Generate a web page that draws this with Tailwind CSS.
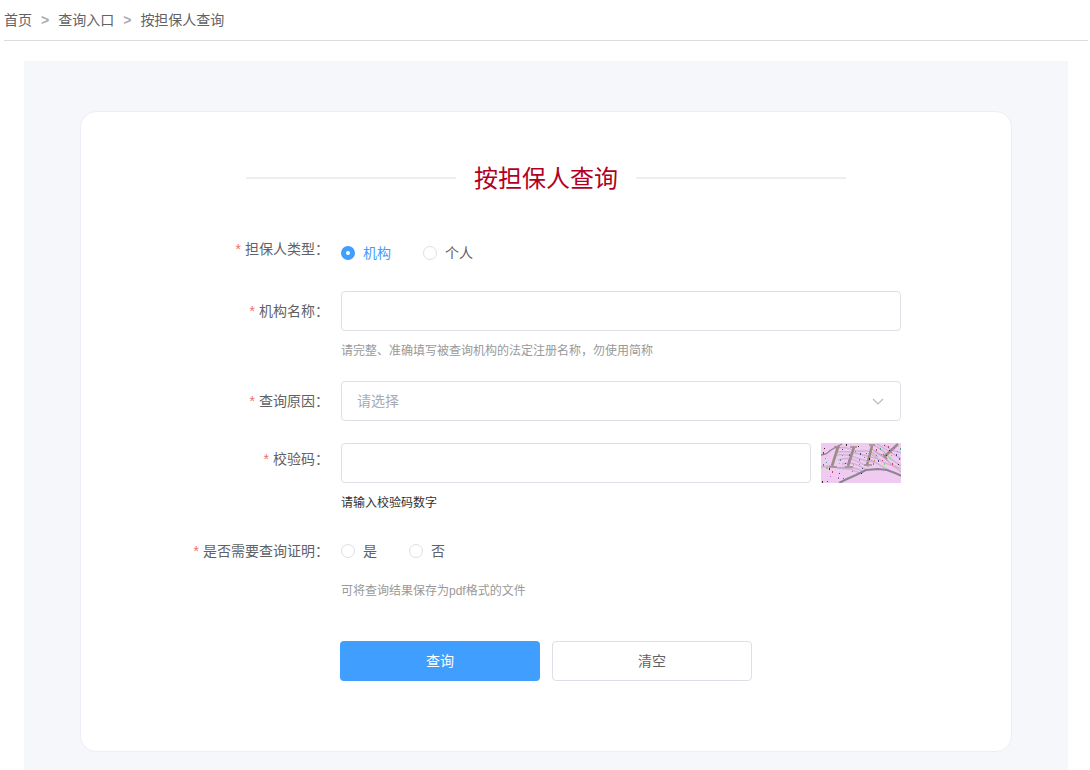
<!DOCTYPE html>
<html lang="zh-CN">
<head>
<meta charset="utf-8">
<meta name="viewport" content="width=device-width, initial-scale=1">
<title>按担保人查询</title>
<script src="https://cdn.jsdelivr.net/npm/@tailwindcss/browser@4"></script>
</head>
<body class="bg-white font-['Liberation_Sans','Noto_Sans_CJK_SC',sans-serif] text-sm text-[#606266]">
<nav aria-label="面包屑" class="ml-1 mr-0.5 flex h-[41px] items-center border-b border-[#dcdcdc]">
  <a href="#">首页</a><span class="mx-[9px] font-bold text-[#a8abb2]">&gt;</span>
  <a href="#">查询入口</a><span class="mx-[9px] font-bold text-[#a8abb2]">&gt;</span>
  <a href="#" aria-current="page">按担保人查询</a>
</nav>
<main class="ml-6 mr-[22px] mt-5 bg-[#f5f7fb] px-14 pt-[50px] pb-[18px]">
  <section class="rounded-2xl border border-[#ebeef5] bg-white pt-[47px] pb-[70px]">
    <div class="mx-auto flex max-w-[600px] items-center">
      <span class="h-0.5 flex-1 bg-[#eeeeee]"></span>
      <h1 class="w-[180px] pt-0.5 text-center text-2xl leading-9 font-normal text-[#b1001f]">按担保人查询</h1>
      <span class="h-0.5 flex-1 bg-[#eeeeee]"></span>
    </div>
    <form class="mx-auto mt-8 max-w-[710px]">
      <div class="mb-[22px] flex" role="radiogroup" aria-labelledby="type-label">
        <span id="type-label" class="w-[150px] shrink-0 pr-3 text-right leading-10"><span class="mr-1 text-[#f56c6c]">*</span>担保人类型：</span>
        <div class="flex h-10 items-center gap-8 pt-2">
          <label class="flex items-center gap-2 text-[#409eff]"><input type="radio" name="type" checked class="size-3.5 appearance-none rounded-full border border-[#dcdfe6] bg-white checked:border-5 checked:border-[#409eff]">机构</label>
          <label class="flex items-center gap-2"><input type="radio" name="type" class="size-3.5 appearance-none rounded-full border border-[#dcdfe6] bg-white checked:border-5 checked:border-[#409eff]">个人</label>
        </div>
      </div>
      <div class="mb-5 flex">
        <label for="org" class="w-[150px] shrink-0 pr-3 text-right leading-10"><span class="mr-1 text-[#f56c6c]">*</span>机构名称：</label>
        <div class="flex-1">
          <input id="org" type="text" class="block h-10 w-full rounded border border-[#dcdfe6] px-4 outline-none">
          <p class="mt-2.5 text-xs leading-5 text-[#999999]">请完整、准确填写被查询机构的法定注册名称，勿使用简称</p>
        </div>
      </div>
      <div class="mb-[22px] flex">
        <label for="reason" class="w-[150px] shrink-0 pr-3 text-right leading-10"><span class="mr-1 text-[#f56c6c]">*</span>查询原因：</label>
        <div class="relative flex-1">
          <select id="reason" class="block h-10 w-full appearance-none rounded border border-[#dcdfe6] bg-white px-[15px] text-[#a8abb2] outline-none"><option>请选择</option></select>
          <svg class="pointer-events-none absolute top-[13px] right-4 size-3.5" viewBox="0 0 14 14" fill="none" stroke="#b4b8c0" stroke-width="1.1"><path d="M2 5l5 5 5-5"/></svg>
        </div>
      </div>
      <div class="mb-[18px] flex">
        <label for="code" class="w-[150px] shrink-0 pr-3 text-right leading-8"><span class="mr-1 text-[#f56c6c]">*</span>校验码：</label>
        <div class="flex-1">
          <div class="flex gap-2.5">
            <input id="code" type="text" class="block h-10 min-w-0 flex-1 rounded border border-[#dcdfe6] px-4 outline-none">
            <svg class="h-10 w-20" viewBox="0 0 80 40" role="img" aria-label="校验码图片">
              <rect width="80" height="40" fill="#efcaf1"/>
              <g fill="none" stroke="#a89aad" stroke-opacity=".5" stroke-width="1.3">
                <path d="M14 6q8-3 15 0t14 2 14 6M16 9q9-1 18 1t23 6M13 13q10-3 20 1t21 5M17 17q10-3 16 0t15 7M21 21q8-2 13 0t12 6M20 25q8-1 13 0t10 4M0 24l9-1 8 2 8-1M53 2l9 6 8 8 10 7M56 1l10 6 14 9M53 8l10 6 7 7 10 5M50 11l12 8 12 5 6 5M63 2l8 5 9 3"/>
                <path d="M17 25l12 1 10 4M48 16l9 5 12 7M51 6l7 5 9 7"/>
              </g>
              <g fill="none" stroke="#8d8490">
                <path d="M0 12l5-1 5-4 5-3 6-3" stroke-width="1.3"/>
                <path d="M18 40l8-4 9-4 10-5 12-1 9 1 8 3 7 3" stroke-width="2"/>
              </g>
              <g fill="none" stroke="#9b8d86" stroke-width="2.6">
                <path d="M17 4l-6 19M33 4l-6 19M51 3l-5 19M77 1L63 14"/>
                <path d="M13 4h6M8 24h8M29 4h7M24 24h8M48 2h6M43 22h8M62 11l4 5" stroke-width="1.7"/>
              </g>
              <path fill="#d63b62" d="M2 21h1v2h-1zM11 28h1v2h-1zM28 11h1v2h-1zM55 6h1v2h-1zM67 3h1v2h-1zM61 17h1v1h-1zM78 15h1v2h-1zM22 35h1v1h-1zM45 10h1v1h-1zM71 20h1v2h-1z"/>
              <path fill="#354b9b" d="M2 9h1v2h-1zM24 20h1v1h-1zM18 30h1v1h-1zM39 10h1v2h-1zM41 25h1v1h-1zM57 17h1v2h-1zM63 2h1v1h-1zM75 11h1v2h-1zM6 38h1v1h-1zM21 6h1v1h-1z"/>
              <path fill="#43231e" d="M1 38h1v2h-1zM3 5h1v1h-1zM8 25h1v2h-1zM25 1h1v2h-1zM40 30h1v1h-1zM48 15h1v2h-1zM65 12h1v1h-1zM68 7h1v1h-1zM77 21h1v1h-1zM37 3h1v1h-1z"/>
              <path fill="#43a88d" d="M5 19h1v1h-1zM19 16h1v2h-1zM34 8h1v1h-1zM38 16h1v2h-1zM55 12h1v1h-1zM59 5h1v2h-1zM70 9h1v1h-1zM79 5h1v2h-1zM52 20h1v2h-1z"/>
              <path fill="#79dd48" d="M5 24h2v2h-2zM18 20h1v1h-1zM32 21h1v2h-1zM46 18h2v1h-2zM63 20h1v2h-1zM69 15h1v1h-1z"/>
              <path fill="#b55fd0" d="M17 34h1v2h-1zM31 28h1v1h-1zM9 33h1v1h-1zM43 14h1v1h-1zM60 11h1v1h-1zM73 4h1v2h-1zM27 17h1v1h-1z"/>
              <path fill="#d58b35" d="M4 15h1v1h-1zM21 12h1v1h-1zM38 21h1v1h-1zM53 17h1v1h-1zM70 12h1v1h-1zM76 8h1v1h-1z"/>
            </svg>
          </div>
          <p class="mt-2.5 text-xs leading-5 text-[#303133]">请输入校验码数字</p>
        </div>
      </div>
      <div class="flex" role="radiogroup" aria-labelledby="proof-label">
        <span id="proof-label" class="w-[150px] shrink-0 pr-3 text-right leading-10"><span class="mr-1 text-[#f56c6c]">*</span>是否需要查询证明：</span>
        <div>
          <div class="flex h-10 items-center gap-8">
            <label class="flex items-center gap-2"><input type="radio" name="proof" class="size-3.5 appearance-none rounded-full border border-[#dcdfe6] bg-white checked:border-5 checked:border-[#409eff]">是</label>
            <label class="flex items-center gap-2"><input type="radio" name="proof" class="size-3.5 appearance-none rounded-full border border-[#dcdfe6] bg-white checked:border-5 checked:border-[#409eff]">否</label>
          </div>
          <p class="mt-2.5 text-xs leading-5 text-[#999999]">可将查询结果保存为pdf格式的文件</p>
        </div>
      </div>
      <div class="mt-10 flex justify-center gap-3">
        <button type="submit" class="h-10 w-[200px] rounded bg-[#409eff] text-white">查询</button>
        <button type="reset" class="h-10 w-[200px] rounded border border-[#dcdfe6] bg-white">清空</button>
      </div>
    </form>
  </section>
</main>
</body>
</html>
